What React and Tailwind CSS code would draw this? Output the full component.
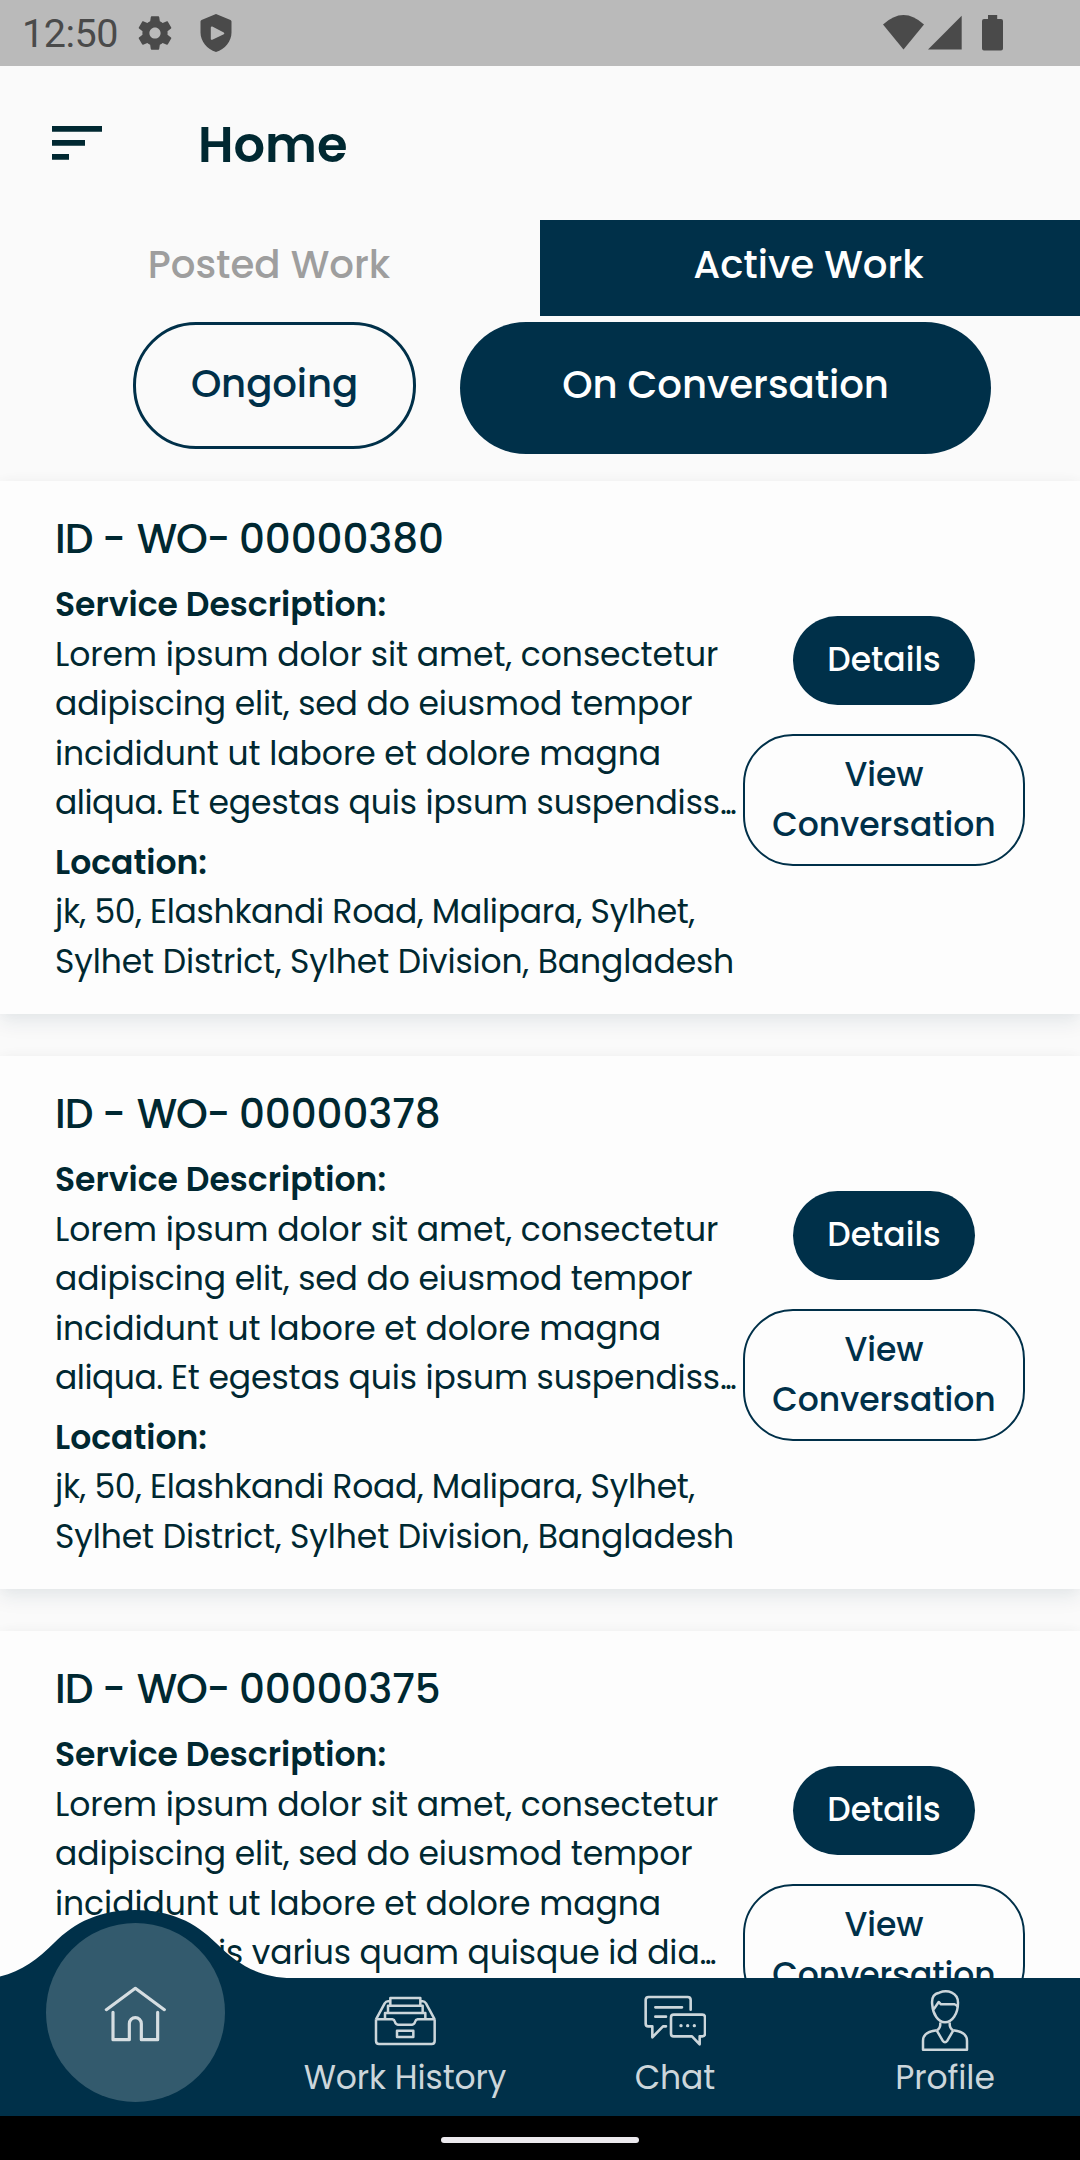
import React from "react";

const cards = [
  { id: "00000380", first: "aliqua.", last: "Et egestas quis ipsum suspendiss" },
  { id: "00000378", first: "aliqua.", last: "Et egestas quis ipsum suspendiss" },
  { id: "00000375", first: "aliqua.", last: "Quis varius quam quisque id dia" },
];

function StatusBar() {
  return (
    <div className="flex h-[66px] shrink-0 items-center bg-[#bababa] pl-[22px] pr-[75px] text-[#4a4a4a]">
      <span className="w-[112px] pt-[2px] font-[Roboto,sans-serif] text-[39.5px] leading-[64px] tracking-[-0.5px]">12:50</span>
      <svg className="size-[42px] shrink-0" viewBox="0 0 24 24" fill="currentColor">
        <path d="M19.14 12.94c.04-.3.06-.61.06-.94 0-.32-.02-.64-.07-.94l2.03-1.58c.18-.14.23-.41.12-.61l-1.92-3.32c-.12-.22-.37-.29-.59-.22l-2.39.96c-.5-.38-1.03-.7-1.62-.94l-.36-2.54c-.04-.24-.24-.41-.48-.41h-3.84c-.24 0-.43.17-.47.41l-.36 2.54c-.59.24-1.13.57-1.62.94l-2.39-.96c-.22-.08-.47 0-.59.22L2.74 8.87c-.12.21-.08.47.12.61l2.03 1.58c-.05.3-.09.63-.09.94s.02.64.07.94l-2.03 1.58c-.18.14-.23.41-.12.61l1.92 3.32c.12.22.37.29.59.22l2.39-.96c.5.38 1.03.7 1.62.94l.36 2.54c.05.24.24.41.48.41h3.84c.24 0 .44-.17.47-.41l.36-2.54c.59-.24 1.13-.56 1.62-.94l2.39.96c.22.08.47 0 .59-.22l1.92-3.32c.12-.22.07-.47-.12-.61l-2.01-1.58zM12 15.2c-1.77 0-3.2-1.43-3.2-3.2s1.43-3.2 3.2-3.2 3.2 1.43 3.2 3.2-1.43 3.2-3.2 3.2z" />
      </svg>
      <svg className="ml-[24px] h-[38px] w-[32px] shrink-0" viewBox="0 0 32 38" fill="currentColor" fillRule="evenodd">
        <path d="M16 0 30.500 6q1 .5 1 1.500V18.500C31.500 27 25 35.500 16 38 7 35.500.5 27 .5 18.500V7.500Q.5 6.500 1.500 6ZM10.800 13.500v11.500q.2 1.200 1.500.7l11.500-5.500q1.200-.9 0-1.800L12.300 12.600q-1.300-.3-1.500.9Z" />
      </svg>
      <svg className="ml-auto h-[36px] w-[122px] shrink-0" viewBox="0 0 122 36" fill="currentColor">
        <path d="M0 9.500Q20.500-9.500 41 9.500L20.500 34.500Z" />
        <path d="M45 34.500 78.700.8V34.500Z" />
        <path d="M105 0h9.200v4h3.800q2 0 2 2v27.500q0 2-2 2h-17q-2 0-2-2V6q0-2 2-2h4Z" />
      </svg>
    </div>
  );
}

function Header() {
  return (
    <header className="flex h-[154px] shrink-0 items-center pl-[52px] text-[#002831]">
      <svg className="h-[34px] w-[50px]" viewBox="0 0 50 34" fill="currentColor">
        <path d="M0 0h50v5.700H0zM0 14h33v5.700H0zM0 28h17v5.700H0z" />
      </svg>
      <h1 className="ml-[96px] pt-[3px] text-[49.5px] font-semibold leading-[74px]">Home</h1>
    </header>
  );
}

function Filters() {
  return (
    <div className="shrink-0 text-[38.700px] font-medium leading-[58px]">
      <div className="grid h-[96px] grid-cols-2 text-center">
        <button className="pb-[22px] pr-[2px] pt-[15px] text-[#9e9e9e]">Posted Work</button>
        <button className="bg-[#003049] pb-[22px] pr-[3px] pt-[15px] text-white">Active Work</button>
      </div>
      <div className="flex items-start gap-[44px] pl-[133px] pt-[6px]">
        <button className="h-[127px] w-[283px] rounded-[63px] border-[3px] border-[#003049] pb-[3px] tracking-[-0.1px] text-[#003049]">Ongoing</button>
        <button className="h-[132px] w-[531px] rounded-[66px] bg-[#003049] pb-[6px] tracking-[-0.05px] text-white">On Conversation</button>
      </div>
    </div>
  );
}

function Card({ id, first, last }) {
  return (
    <article className="flex h-[533px] shrink-0 bg-[#fdfdfd] pl-[55px] pr-[55px] text-[33px] leading-[49.500px] text-[#002831] shadow-[0_9px_18px_rgba(0,48,73,0.08),0_0_14px_rgba(0,48,73,0.03)]">
      <div className="w-[688px] shrink-0 whitespace-nowrap pt-[28px]">
        <h2 className="mb-[11px] text-[40.500px] font-medium leading-[60px]">
          <span className="tracking-[-1px]">ID -</span>
          <span className="ml-[12px] tracking-[-1.2px]">WO-</span>
          <span className="ml-[10px] tracking-[-0.1px]">{id}</span>
        </h2>
        <h3 className="font-semibold">Service Description:</h3>
        <p className="tracking-[-0.100px]">
          <span className="tracking-[-0.030px]">Lorem ipsum dolor sit amet, consectetur</span>
          <br />
          adipiscing elit, sed do eiusmod tempor
          <br />
          <span className="tracking-[-0.060px]">incididunt ut labore et dolore magna</span>
          <br />
          <span className="tracking-[-0.500px]">{first} </span>
          {last}
          <span className="tracking-[-1.900px]">...</span>
        </p>
        <h3 className="mt-[10px] font-semibold">Location:</h3>
        <p className="tracking-[-0.280px]">
          jk, 50, Elashkandi Road, Malipara, Sylhet,
          <br />
          <span className="tracking-[-0.110px]">Sylhet District, Sylhet Division, Bangladesh</span>
        </p>
      </div>
      <div className="flex w-[282px] shrink-0 flex-col items-center pt-[135px] font-medium">
        <button className="h-[89px] w-[182px] shrink-0 rounded-[44.500px] bg-[#003049] pb-[2px] text-white">Details</button>
        <button className="mt-[29px] h-[132px] w-[282px] shrink-0 rounded-[50px] border-2 border-[#003049] pb-[1px] text-[#003049]">
          View
          <br />
          Conversation
        </button>
      </div>
    </article>
  );
}

function ArchiveIcon() {
  return (
    <svg className="size-[62px]" viewBox="222 150 186 186" fill="none" stroke="currentColor" strokeWidth="7.500" strokeLinejoin="round">
      <path d="M228 238V303Q228 312 237 312H395Q404 312 404 303V238" />
      <path d="M228 238H277Q283 239 285 246 287 253 294 254H336Q343 253 345 246 347 239 353 238H404" />
      <path d="M228 238 254 190Q258 184 264 184H270M404 238 378 190Q374 184 368 184H362" />
      <path d="M271 196V174H361V196M264 218V197H368V218M255 236V219H376V236" />
      <path d="M291 272H340V291H291Z" />
    </svg>
  );
}

function ChatIcon() {
  return (
    <svg className="size-[62px]" viewBox="252 150 186 186" fill="none" stroke="currentColor" strokeWidth="7.800" strokeLinecap="round" strokeLinejoin="round">
      <path d="M392 209V180Q392 171 383 171H266Q257 171 257 180V251Q257 259 265 259H277V292L309 259H318" />
      <path d="M286 202H366M286 230H318" />
      <path d="M341 224H427Q435 224 435 232V281Q435 289 427 289H419V313L396 289H341Q333 289 333 281V232Q333 224 341 224Z" />
      <g fill="currentColor" stroke="none">
        <circle cx="363" cy="257" r="5" />
        <circle cx="383" cy="257" r="5" />
        <circle cx="403" cy="257" r="5" />
      </g>
    </svg>
  );
}

function ProfileIcon() {
  return (
    <svg className="size-[62px]" viewBox="1062 150 186 186" fill="none" stroke="currentColor" strokeWidth="7.500" strokeLinejoin="round">
      <path d="M1117 196C1113 170 1124 160 1138 158 1163 148 1194 158 1194 188 1194 222 1176 247 1155 247 1134 247 1119 222 1117 196Z" />
      <path d="M1121 208 1136 186 1143 193H1184Q1191 195 1193 201" />
      <path d="M1141 247Q1142 266 1130 271M1169 247Q1168 266 1180 271" />
      <path d="M1130 271C1103 274 1089 282 1089 302V329H1221V302C1221 282 1207 274 1180 271" />
      <path d="M1130 271 1148 302Q1155 311 1162 302L1180 271" />
    </svg>
  );
}

function HomeIcon() {
  return (
    <svg className="size-[62px]" viewBox="312 366 186 186" fill="none" stroke="currentColor" strokeWidth="9.500" strokeLinecap="round" strokeLinejoin="round">
      <path d="M319 449 406 385 493 449" />
      <path d="M339 457V539H388V491A18 18 0 0 1 424 491V539H473V457" />
    </svg>
  );
}

function NavItem({ icon, label }) {
  return (
    <button className="flex flex-col items-center pt-[12px]">
      {icon}
      <span className="mt-px">{label}</span>
    </button>
  );
}

function BottomNav() {
  return (
    <nav className="relative grid h-[138px] shrink-0 grid-cols-4 bg-[#003049] text-[33px] leading-[49.500px] tracking-[-0.080px] text-[#ccd6db]">
      <svg className="absolute left-0 top-[-68px] h-[69px] w-[300px]" viewBox="0 0 300 69" fill="#003049">
        <path d="M0 66.500C22 61 38 49 54 33 75 12 100 0 135 0S195 12 216 33C238 55 260 68 292 68H300V69H0Z" />
      </svg>
      <div className="relative mx-auto mt-[-55px] flex size-[179px] justify-center rounded-full bg-[#335a6d] pt-[59px] text-[#d6dee2]">
        <HomeIcon />
      </div>
      <NavItem icon={<ArchiveIcon />} label="Work History" />
      <NavItem icon={<ChatIcon />} label="Chat" />
      <NavItem icon={<ProfileIcon />} label="Profile" />
    </nav>
  );
}

export default function App() {
  return (
    <div className="flex h-[2160px] w-[1080px] flex-col overflow-hidden bg-[#fafafa] font-[Poppins,Inter,sans-serif]">
      <StatusBar />
      <Header />
      <Filters />
      <main className="flex min-h-0 flex-1 flex-col gap-[42px] overflow-hidden pt-[27px]">
        {cards.map((card) => (
          <Card key={card.id} {...card} />
        ))}
      </main>
      <BottomNav />
      <div className="flex h-[44px] shrink-0 justify-center bg-black pt-[21px]">
        <div className="h-[6px] w-[198px] rounded-full bg-[#ece9ee]" />
      </div>
    </div>
  );
}
